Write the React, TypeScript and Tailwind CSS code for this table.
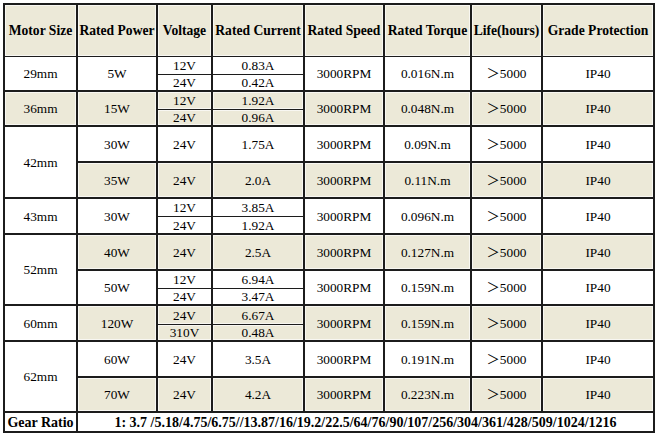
import React from 'react';

type CellProps = {
  children?: React.ReactNode;
  beige?: boolean;
  bold?: boolean;
  rs?: number;
  cs?: number;
  thin?: boolean;
  first?: boolean;
};

const Cell: React.FC<CellProps> = ({ children, beige, bold, rs, cs, thin, first }) => (
  <td
    rowSpan={rs}
    colSpan={cs}
    className={`p-0 text-center align-middle whitespace-nowrap border-r-2 border-[#1c1c1c] ${
      thin ? 'border-b' : 'border-b-2'
    } ${first ? 'border-l-2' : ''} ${
      beige ? 'bg-[#ece9d8] shadow-[inset_0_0_0_1px_#f8f7f2]' : 'bg-white'
    } ${bold ? 'font-bold text-[14px]' : ''}`}
  >
    {children}
  </td>
);

const headers = [
  'Motor Size',
  'Rated Power',
  'Voltage',
  'Rated Current',
  'Rated Speed',
  'Rated Torque',
  'Life(hours)',
  'Grade Protection',
];

const colWidths = [75, 80, 55, 92, 80, 87, 71, 112];

const App: React.FC = () => {
  return (
    <div className="w-[660px] h-[437px] bg-white pt-[3px] pl-[3px] overflow-hidden">
      <table
        className="border-separate border-spacing-0 table-fixed w-[652px] text-[13.3px] leading-[15px] text-black"
        style={{ fontFamily: '"Liberation Serif", "Times New Roman", "Noto Sans CJK SC", serif' }}
      >
        <colgroup>
          {colWidths.map((w, i) => (
            <col key={i} style={{ width: w }} />
          ))}
        </colgroup>
        <tbody>
          {/* Header */}
          <tr className="h-[54px]">
            {headers.map((h, i) => (
              <td
                key={h}
                className={`p-0 text-center align-middle whitespace-nowrap font-bold text-[13.6px] border-t-2 border-r-2 border-b border-[#1c1c1c] bg-[#ece9d8] shadow-[inset_0_0_0_1px_#f8f7f2] ${
                  i === 0 ? 'border-l-2' : ''
                }`}
              >
                {h}
              </td>
            ))}
          </tr>

          {/* 29mm */}
          <tr className="h-[18px]">
            <Cell rs={2} first>29mm</Cell>
            <Cell rs={2}>5W</Cell>
            <Cell thin>12V</Cell>
            <Cell thin>0.83A</Cell>
            <Cell rs={2}>3000RPM</Cell>
            <Cell rs={2}>0.016N.m</Cell>
            <Cell rs={2}>＞5000</Cell>
            <Cell rs={2}>IP40</Cell>
          </tr>
          <tr className="h-[17px]">
            <Cell>24V</Cell>
            <Cell>0.42A</Cell>
          </tr>

          {/* 36mm */}
          <tr className="h-[18px]">
            <Cell rs={2} first beige>36mm</Cell>
            <Cell rs={2} beige>15W</Cell>
            <Cell thin beige>12V</Cell>
            <Cell thin beige>1.92A</Cell>
            <Cell rs={2} beige>3000RPM</Cell>
            <Cell rs={2} beige>0.048N.m</Cell>
            <Cell rs={2} beige>＞5000</Cell>
            <Cell rs={2} beige>IP40</Cell>
          </tr>
          <tr className="h-[17px]">
            <Cell beige>24V</Cell>
            <Cell beige>0.96A</Cell>
          </tr>

          {/* 42mm */}
          <tr className="h-[36px]">
            <Cell rs={2} first>42mm</Cell>
            <Cell>30W</Cell>
            <Cell>24V</Cell>
            <Cell>1.75A</Cell>
            <Cell>3000RPM</Cell>
            <Cell>0.09N.m</Cell>
            <Cell>＞5000</Cell>
            <Cell>IP40</Cell>
          </tr>
          <tr className="h-[36px]">
            <Cell beige>35W</Cell>
            <Cell beige>24V</Cell>
            <Cell beige>2.0A</Cell>
            <Cell beige>3000RPM</Cell>
            <Cell beige>0.11N.m</Cell>
            <Cell beige>＞5000</Cell>
            <Cell beige>IP40</Cell>
          </tr>

          {/* 43mm */}
          <tr className="h-[18px]">
            <Cell rs={2} first>43mm</Cell>
            <Cell rs={2}>30W</Cell>
            <Cell thin>12V</Cell>
            <Cell thin>3.85A</Cell>
            <Cell rs={2}>3000RPM</Cell>
            <Cell rs={2}>0.096N.m</Cell>
            <Cell rs={2}>＞5000</Cell>
            <Cell rs={2}>IP40</Cell>
          </tr>
          <tr className="h-[18px]">
            <Cell>24V</Cell>
            <Cell>1.92A</Cell>
          </tr>

          {/* 52mm */}
          <tr className="h-[36px]">
            <Cell rs={3} first>52mm</Cell>
            <Cell beige>40W</Cell>
            <Cell beige>24V</Cell>
            <Cell beige>2.5A</Cell>
            <Cell beige>3000RPM</Cell>
            <Cell beige>0.127N.m</Cell>
            <Cell beige>＞5000</Cell>
            <Cell beige>IP40</Cell>
          </tr>
          <tr className="h-[18px]">
            <Cell rs={2}>50W</Cell>
            <Cell thin>12V</Cell>
            <Cell thin>6.94A</Cell>
            <Cell rs={2}>3000RPM</Cell>
            <Cell rs={2}>0.159N.m</Cell>
            <Cell rs={2}>＞5000</Cell>
            <Cell rs={2}>IP40</Cell>
          </tr>
          <tr className="h-[17px]">
            <Cell>24V</Cell>
            <Cell>3.47A</Cell>
          </tr>

          {/* 60mm */}
          <tr className="h-[19px]">
            <Cell rs={2} first>60mm</Cell>
            <Cell rs={2} beige>120W</Cell>
            <Cell thin beige>24V</Cell>
            <Cell thin beige>6.67A</Cell>
            <Cell rs={2} beige>3000RPM</Cell>
            <Cell rs={2} beige>0.159N.m</Cell>
            <Cell rs={2} beige>＞5000</Cell>
            <Cell rs={2} beige>IP40</Cell>
          </tr>
          <tr className="h-[17px]">
            <Cell beige>310V</Cell>
            <Cell beige>0.48A</Cell>
          </tr>

          {/* 62mm */}
          <tr className="h-[36px]">
            <Cell rs={2} first>62mm</Cell>
            <Cell>60W</Cell>
            <Cell>24V</Cell>
            <Cell>3.5A</Cell>
            <Cell>3000RPM</Cell>
            <Cell>0.191N.m</Cell>
            <Cell>＞5000</Cell>
            <Cell>IP40</Cell>
          </tr>
          <tr className="h-[35px]">
            <Cell beige>70W</Cell>
            <Cell beige>24V</Cell>
            <Cell beige>4.2A</Cell>
            <Cell beige>3000RPM</Cell>
            <Cell beige>0.223N.m</Cell>
            <Cell beige>＞5000</Cell>
            <Cell beige>IP40</Cell>
          </tr>

          {/* Gear ratio */}
          <tr className="h-[20px]">
            <Cell first bold>Gear Ratio</Cell>
            <Cell cs={7} bold>
              1: 3.7 /5.18/4.75/6.75//13.87/16/19.2/22.5/64/76/90/107/256/304/361/428/509/1024/1216
            </Cell>
          </tr>
        </tbody>
      </table>
    </div>
  );
};

export default App;
